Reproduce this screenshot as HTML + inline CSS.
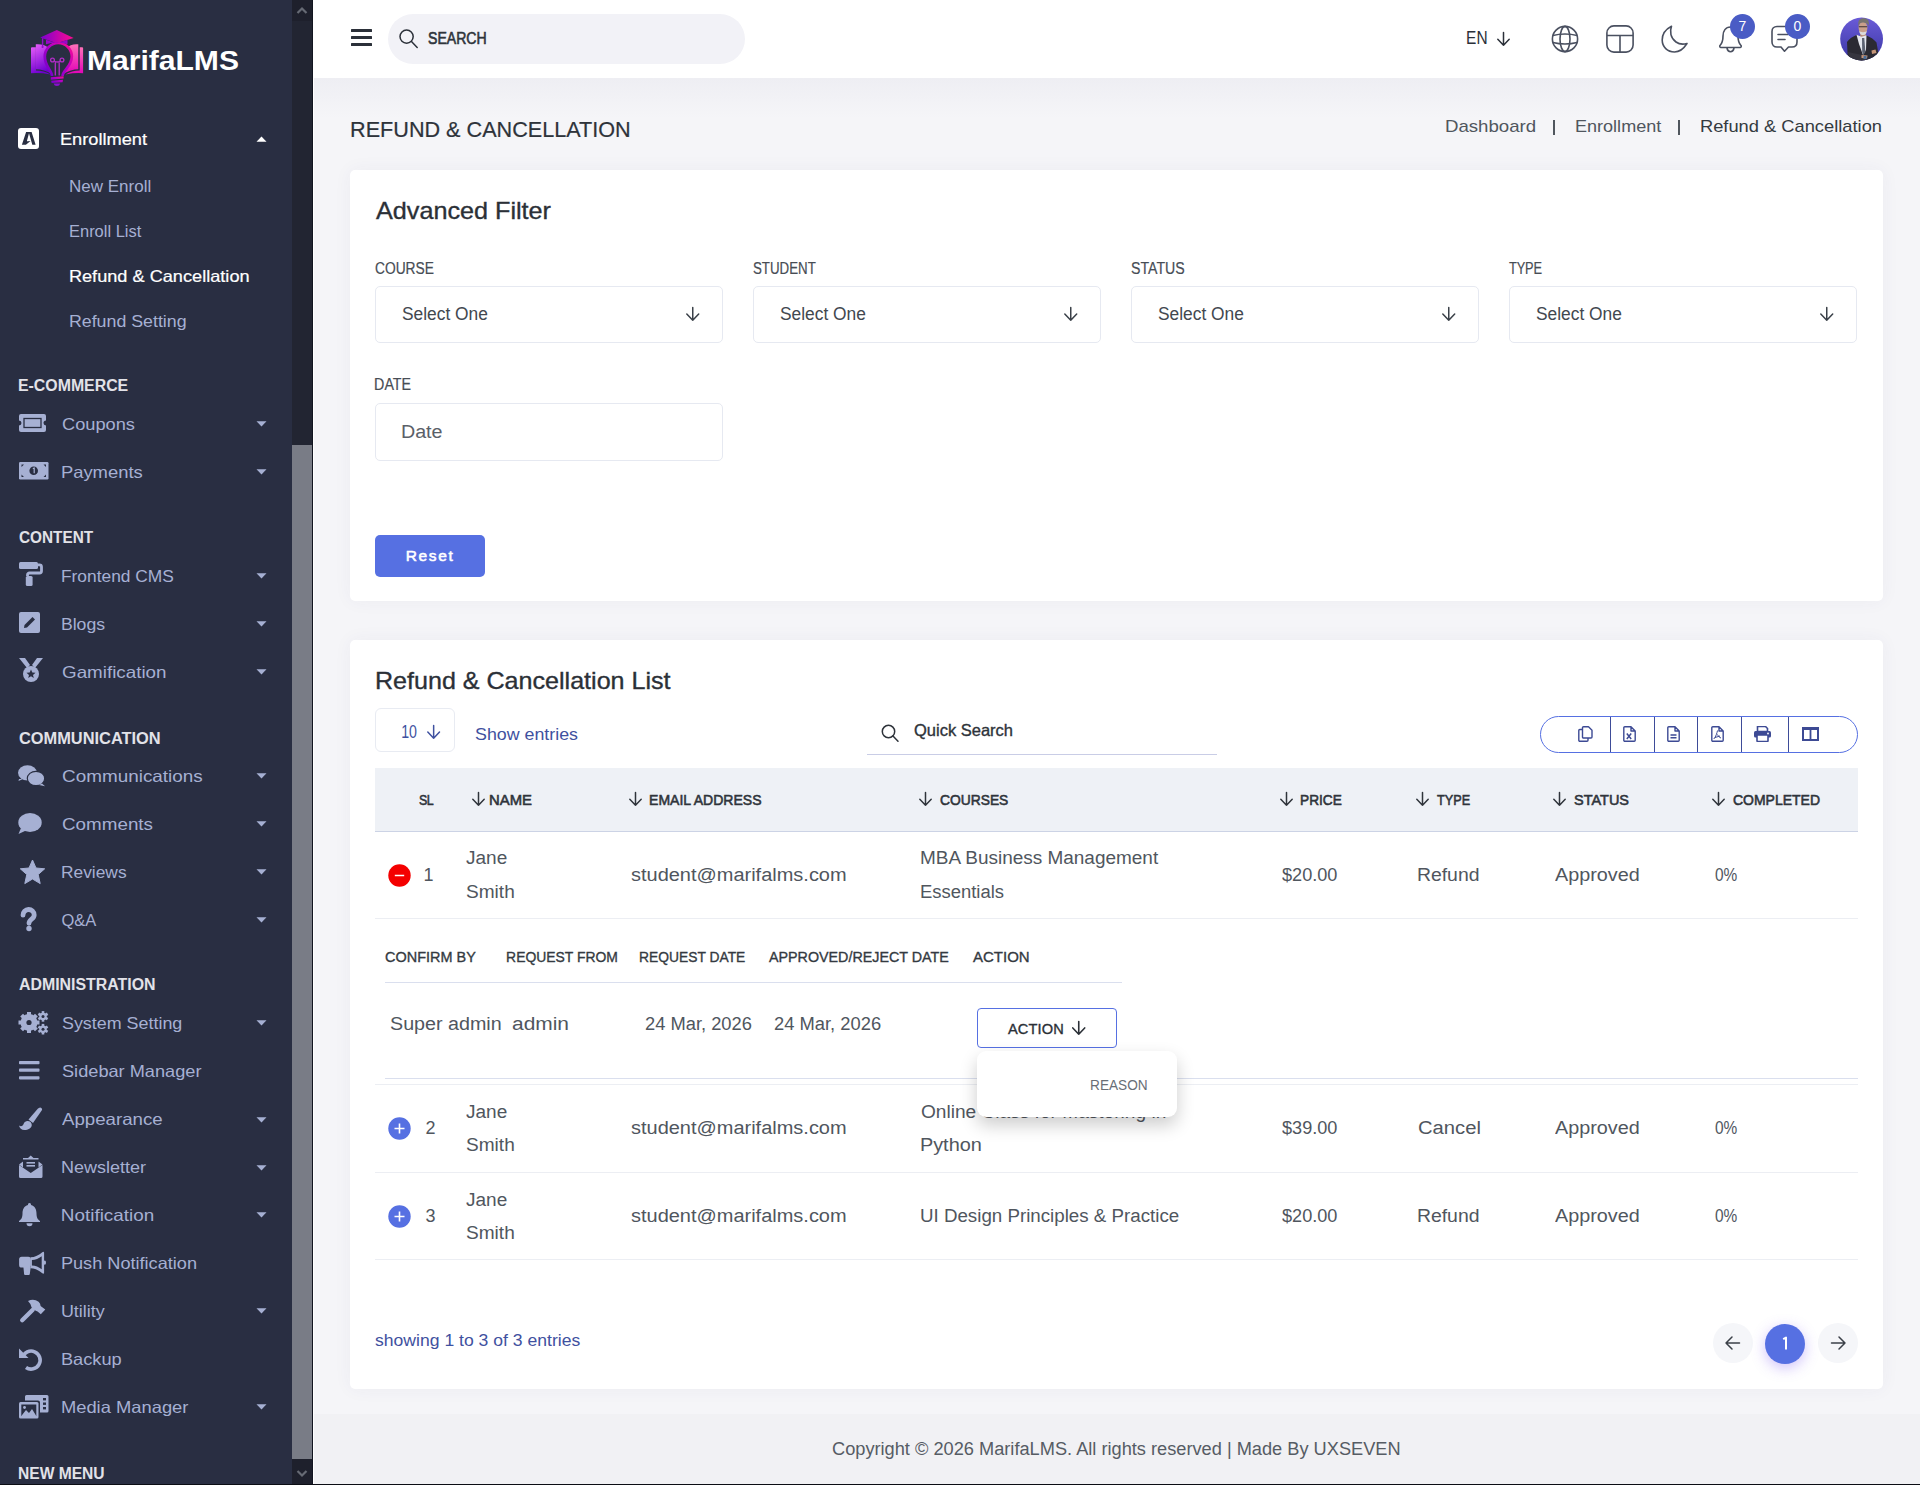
<!DOCTYPE html>
<html><head><meta charset="utf-8"><title>Refund &amp; Cancellation</title>
<style>
html,body{margin:0;padding:0;width:1920px;height:1485px;overflow:hidden;background:#F4F4F8}
body{position:relative;font-family:"Liberation Sans",sans-serif}
.t{position:absolute;white-space:nowrap;line-height:1}
svg{display:block}
</style></head><body>
<div style="position:absolute;left:0;top:0;width:292px;height:1485px;background:#292E42"></div><div style="position:absolute;left:292px;top:0;width:20px;height:1485px;background:#222532"></div><div style="position:absolute;left:292px;top:0;width:20px;height:21px;background:#1E202C"></div><div style="position:absolute;left:292px;top:1459px;width:20px;height:25px;background:#1E202C"></div><div style="position:absolute;left:292px;top:445px;width:20px;height:1014px;background:#797C86"></div><div style="position:absolute;left:312px;top:0;width:1px;height:1485px;background:#121520"></div><svg style="position:absolute;left:292px;top:0" width="20" height="21"><path d="M5.5 13 L10 8.5 L14.5 13" stroke="#666A74" stroke-width="2.2" fill="none"/></svg><svg style="position:absolute;left:292px;top:1459px" width="20" height="25"><path d="M5.5 12 L10 16.5 L14.5 12" stroke="#666A74" stroke-width="2.2" fill="none"/></svg><svg style="position:absolute;left:26px;top:26px" width="64" height="64" viewBox="0 0 64 64">
<defs>
<linearGradient id="lgA" x1="0" y1="1" x2="1" y2="0"><stop offset="0" stop-color="#6A00CC"/><stop offset="0.55" stop-color="#B400C8"/><stop offset="1" stop-color="#FF0A90"/></linearGradient>
<linearGradient id="lgL" x1="0" y1="0" x2="0.3" y2="1"><stop offset="0" stop-color="#E25AF8"/><stop offset="1" stop-color="#6E00D0"/></linearGradient>
<linearGradient id="lgR" x1="0" y1="0" x2="0" y2="1"><stop offset="0" stop-color="#FF70B8"/><stop offset="1" stop-color="#E000B8"/></linearGradient>
<linearGradient id="lgC" x1="0" y1="0" x2="1" y2="0"><stop offset="0" stop-color="#7A00D0"/><stop offset="1" stop-color="#FF0A90"/></linearGradient>
</defs>
<path d="M5 22 Q5 21.3 6 21.3 H9.9 V44.5 Q18 44.5 24.5 48.5 Q15 46.5 5 47.2 Z" fill="url(#lgL)"/>
<path d="M9.8 18.3 Q17.5 17.5 24 22.5 L26 48 Q18 43.2 9.8 43.2 Z" fill="url(#lgL)"/>
<path d="M57.1 22 Q57.1 21.3 56.1 21.3 H53.7 V44.5 Q46 44.5 39.5 48.5 Q49 46.5 57.1 47.2 Z" fill="url(#lgR)"/>
<path d="M52.3 18.3 Q45 17.5 40 22.5 L37 48 Q45 43.2 52.3 43.2 Z" fill="url(#lgR)"/>
<path d="M26 50 C26 44.5 18.8 40.5 18.8 30.5 A13.5 13.5 0 0 1 45.8 30.5 C45.8 40.5 36.6 44.5 36.6 50 Z" fill="#292E42"/>
<path d="M26 50 C26 44.5 18.8 40.5 18.8 30.5 A13.5 13.5 0 0 1 45.8 30.5 C45.8 40.5 36.6 44.5 36.6 50" fill="none" stroke="url(#lgA)" stroke-width="2.7"/>
<g fill="none" stroke="#B22CC8" stroke-width="1.3"><circle cx="26.5" cy="34" r="1.9"/><circle cx="36" cy="34" r="1.9"/><path d="M28.2 35 Q31.2 37 34.3 35 M29.3 36.2 V49.5 M33.2 36.2 V49.5"/></g>
<path d="M24.8 51.2 L37.6 50.2 L37.6 52.6 L24.8 53.8 Z M25.2 54.8 L37 53.8 L36.6 56.2 L25.6 57 Z" fill="url(#lgA)"/>
<path d="M27.6 57.4 H34.2 Q33.6 60 30.9 60 Q28.2 60 27.6 57.4 Z" fill="#8A10D0"/>
<path d="M14.2 11.6 L30.8 4.1 L47.6 12 L30.8 17.2 Z" fill="url(#lgC)"/>
<path d="M20 13.8 V18.2 Q31 14.6 41.5 18.2 V13.8 L30.8 17.2 Z" fill="#9A08C8"/>
<path d="M16.6 12.2 V20.5" stroke="#9010C8" stroke-width="1.4"/><circle cx="16.6" cy="21" r="1.1" fill="#9010C8"/>
</svg><div class="t" style="left:87.00px;top:47.33px;font-size:27.5px;font-weight:700;letter-spacing:0.000px;color:#FFFFFF;transform:scaleX(1.0937);transform-origin:1.00px 0;">MarifaLMS</div><div style="position:absolute;left:18px;top:128px;width:21px;height:21px;background:#fff;border-radius:3px"></div><svg style="position:absolute;left:18px;top:128px" width="21" height="21"><path d="M8.1 4.1 L13.6 4.1 L17.6 16.7 L14.3 16.7 L11 5.2 L7.9 16.7 L3.9 16.7 Z M6.6 13.4 L12.5 13.1 L7.9 16.7 L5.8 16.7 Z" fill="#292E42"/></svg><div class="t" style="left:60.30px;top:130.78px;font-size:16.5px;font-weight:400;letter-spacing:0.000px;color:#FFFFFF;transform:scaleX(1.1050);transform-origin:1.00px 0;-webkit-text-stroke:0.2px currentColor;">Enrollment</div><svg style="position:absolute;left:256px;top:136px" width="11" height="6"><path d="M0.5 5.8 L5.5 0.5 L10.5 5.8 Z" fill="#fff"/></svg><div class="t" style="left:68.60px;top:178.07px;font-size:16.5px;font-weight:400;letter-spacing:0.000px;color:#A6B0D3;transform:scaleX(1.0306);transform-origin:1.00px 0;">New Enroll</div><div class="t" style="left:68.60px;top:223.17px;font-size:16.5px;font-weight:400;letter-spacing:0.000px;color:#A6B0D3;transform:scaleX(0.9971);transform-origin:1.00px 0;">Enroll List</div><div class="t" style="left:68.60px;top:267.98px;font-size:16.5px;font-weight:400;letter-spacing:0.000px;color:#FFFFFF;transform:scaleX(1.1005);transform-origin:1.00px 0;-webkit-text-stroke:0.2px currentColor;">Refund &amp; Cancellation</div><div class="t" style="left:68.60px;top:313.18px;font-size:16.5px;font-weight:400;letter-spacing:0.000px;color:#A6B0D3;transform:scaleX(1.0779);transform-origin:1.00px 0;">Refund Setting</div><div class="t" style="left:17.70px;top:377.80px;font-size:16px;font-weight:700;letter-spacing:0.000px;color:#E2E2E8;transform:scaleX(0.9915);transform-origin:1.00px 0;">E-COMMERCE</div><div class="t" style="left:61.50px;top:416.18px;font-size:16.5px;font-weight:400;letter-spacing:0.000px;color:#A6B0D3;transform:scaleX(1.1049);transform-origin:-0.00px 0;">Coupons</div><svg style="position:absolute;left:18.5px;top:413.5px;overflow:visible" width="27" height="18" viewBox="0 0 27 18"><path d="M2 0 H25 A2 2 0 0 1 27 2 V6.5 A2.5 2.5 0 0 0 27 11.5 V16 A2 2 0 0 1 25 18 H2 A2 2 0 0 1 0 16 V11.5 A2.5 2.5 0 0 0 0 6.5 V2 A2 2 0 0 1 2 0 Z" fill="#A6B0D3"/><rect x="5" y="4.5" width="17" height="9" fill="none" stroke="#292E42" stroke-width="1.3"/></svg><svg style="position:absolute;left:256px;top:421.3px" width="11" height="6"><path d="M0.5 0.2 L5.5 5.5 L10.5 0.2 Z" fill="#A6B0D3"/></svg><div class="t" style="left:60.50px;top:463.98px;font-size:16.5px;font-weight:400;letter-spacing:0.000px;color:#A6B0D3;transform:scaleX(1.1163);transform-origin:1.00px 0;">Payments</div><svg style="position:absolute;left:18.5px;top:461.7px;overflow:visible" width="29.5" height="17.5" viewBox="0 0 29.5 17.5"><rect x="0" y="0" width="29.5" height="17.5" rx="1.2" fill="#A6B0D3"/><circle cx="14.7" cy="8.8" r="4.3" fill="#292E42"/><path d="M13.8 6.5 L15.2 6 L15.2 11.3" stroke="#A6B0D3" stroke-width="1.2" fill="none"/><path d="M2.5 2.5 L5 2.5 L2.5 5 Z M27 2.5 L24.5 2.5 L27 5 Z M2.5 15 L5 15 L2.5 12.5 Z M27 15 L24.5 15 L27 12.5 Z" fill="#292E42"/></svg><svg style="position:absolute;left:256px;top:469.1px" width="11" height="6"><path d="M0.5 0.2 L5.5 5.5 L10.5 0.2 Z" fill="#A6B0D3"/></svg><div class="t" style="left:18.70px;top:529.80px;font-size:16px;font-weight:700;letter-spacing:0.000px;color:#E2E2E8;transform:scaleX(0.9580);transform-origin:-0.00px 0;">CONTENT</div><div class="t" style="left:60.50px;top:567.88px;font-size:16.5px;font-weight:400;letter-spacing:0.000px;color:#A6B0D3;transform:scaleX(1.0528);transform-origin:1.00px 0;">Frontend CMS</div><svg style="position:absolute;left:18.5px;top:562.4px;overflow:visible" width="24" height="24" viewBox="0 0 24 24"><rect x="0" y="0" width="19" height="7" rx="1.5" fill="#A6B0D3"/><path d="M18.5 2.8 H20.5 A2 2 0 0 1 22.5 4.8 V9 A2 2 0 0 1 20.5 11 H10.5 A2 2 0 0 0 8.5 13 V14" stroke="#A6B0D3" stroke-width="2.8" fill="none"/><rect x="6.8" y="14" width="6.8" height="10" rx="1.5" fill="#A6B0D3"/></svg><svg style="position:absolute;left:256px;top:573px" width="11" height="6"><path d="M0.5 0.2 L5.5 5.5 L10.5 0.2 Z" fill="#A6B0D3"/></svg><div class="t" style="left:60.50px;top:615.88px;font-size:16.5px;font-weight:400;letter-spacing:0.000px;color:#A6B0D3;transform:scaleX(1.0694);transform-origin:1.00px 0;">Blogs</div><svg style="position:absolute;left:18.5px;top:612px;overflow:visible" width="21" height="21" viewBox="0 0 21 21"><rect x="0" y="0" width="21" height="21" rx="2" fill="#A6B0D3"/><path d="M5 16 L5.5 13 L13.5 5 L16 7.5 L8 15.5 Z" fill="#292E42"/></svg><svg style="position:absolute;left:256px;top:621px" width="11" height="6"><path d="M0.5 0.2 L5.5 5.5 L10.5 0.2 Z" fill="#A6B0D3"/></svg><div class="t" style="left:61.50px;top:663.88px;font-size:16.5px;font-weight:400;letter-spacing:0.000px;color:#A6B0D3;transform:scaleX(1.1396);transform-origin:-0.00px 0;">Gamification</div><svg style="position:absolute;left:18.5px;top:658px;overflow:visible" width="24" height="24" viewBox="0 0 24 24"><path d="M0 0 H6 L11 7 L8 10 Z M24 0 H18 L13 7 L16 10 Z" fill="#A6B0D3"/><circle cx="12" cy="16" r="8" fill="#A6B0D3"/><path d="M12 11.5 L13.3 14.6 L16.5 14.8 L14 16.9 L14.8 20 L12 18.3 L9.2 20 L10 16.9 L7.5 14.8 L10.7 14.6 Z" fill="#292E42"/></svg><svg style="position:absolute;left:256px;top:669px" width="11" height="6"><path d="M0.5 0.2 L5.5 5.5 L10.5 0.2 Z" fill="#A6B0D3"/></svg><div class="t" style="left:18.70px;top:730.90px;font-size:16px;font-weight:700;letter-spacing:0.000px;color:#E2E2E8;transform:scaleX(1.0240);transform-origin:-0.00px 0;">COMMUNICATION</div><div class="t" style="left:61.50px;top:768.17px;font-size:16.5px;font-weight:400;letter-spacing:0.000px;color:#A6B0D3;transform:scaleX(1.1457);transform-origin:-0.00px 0;">Communications</div><svg style="position:absolute;left:18.2px;top:764.7px;overflow:visible" width="27" height="21.5" viewBox="0 0 27 21.5"><ellipse cx="9.5" cy="7.8" rx="9.5" ry="7.6" fill="#A6B0D3"/><path d="M1 14 L0.5 16 L5 14 Z" fill="#A6B0D3"/><ellipse cx="18" cy="13.5" rx="8.7" ry="7.2" fill="#A6B0D3" stroke="#292E42" stroke-width="1.2"/><path d="M24 18.5 L27 21.3 L21 20 Z" fill="#A6B0D3"/></svg><svg style="position:absolute;left:256px;top:773.3px" width="11" height="6"><path d="M0.5 0.2 L5.5 5.5 L10.5 0.2 Z" fill="#A6B0D3"/></svg><div class="t" style="left:61.50px;top:816.27px;font-size:16.5px;font-weight:400;letter-spacing:-0.000px;color:#A6B0D3;transform:scaleX(1.1406);transform-origin:-0.00px 0;">Comments</div><svg style="position:absolute;left:18.2px;top:812.9px;overflow:visible" width="24" height="21" viewBox="0 0 24 21"><ellipse cx="12" cy="9.5" rx="11.7" ry="9.5" fill="#A6B0D3"/><path d="M3 15 L0.5 21 L8 17.5 Z" fill="#A6B0D3"/></svg><svg style="position:absolute;left:256px;top:821.4px" width="11" height="6"><path d="M0.5 0.2 L5.5 5.5 L10.5 0.2 Z" fill="#A6B0D3"/></svg><div class="t" style="left:60.50px;top:864.08px;font-size:16.5px;font-weight:400;letter-spacing:0.000px;color:#A6B0D3;transform:scaleX(1.0524);transform-origin:1.00px 0;">Reviews</div><svg style="position:absolute;left:19.5px;top:859.6px;overflow:visible" width="25" height="24" viewBox="0 0 25 24"><path d="M12.5 0 L16 8 L24.7 8.8 L18.2 14.5 L20.2 23.6 L12.5 19 L4.8 23.6 L6.8 14.5 L0.3 8.8 L9 8 Z" fill="#A6B0D3" stroke="#A6B0D3" stroke-width="1" stroke-linejoin="round"/></svg><svg style="position:absolute;left:256px;top:869.2px" width="11" height="6"><path d="M0.5 0.2 L5.5 5.5 L10.5 0.2 Z" fill="#A6B0D3"/></svg><div class="t" style="left:61.50px;top:911.67px;font-size:16.5px;font-weight:400;letter-spacing:0.000px;color:#A6B0D3;">Q&amp;A</div><svg style="position:absolute;left:19.7px;top:907.5px;overflow:visible" width="17" height="23" viewBox="0 0 17 23"><path d="M3 7.2 A5.6 5.6 0 0 1 14.2 7 C14.2 11.2 9 11 9 15.3" stroke="#A6B0D3" stroke-width="4.8" fill="none" stroke-linecap="round"/><circle cx="9" cy="20.5" r="2.7" fill="#A6B0D3"/></svg><svg style="position:absolute;left:256px;top:916.8px" width="11" height="6"><path d="M0.5 0.2 L5.5 5.5 L10.5 0.2 Z" fill="#A6B0D3"/></svg><div class="t" style="left:18.70px;top:976.90px;font-size:16px;font-weight:700;letter-spacing:0.000px;color:#E2E2E8;transform:scaleX(0.9933);transform-origin:-0.00px 0;">ADMINISTRATION</div><div class="t" style="left:61.50px;top:1014.88px;font-size:16.5px;font-weight:400;letter-spacing:0.000px;color:#A6B0D3;transform:scaleX(1.0841);transform-origin:-0.00px 0;">System Setting</div><svg style="position:absolute;left:18.7px;top:1011px;overflow:visible" width="29.5" height="23.5" viewBox="0 0 29.5 23.5"><circle cx="10" cy="11.5" r="8.5" fill="#A6B0D3"/><circle cx="10" cy="11.5" r="2.6" fill="#292E42"/><rect x="8" y="1" width="4" height="21" fill="#A6B0D3" transform="rotate(0 10 11.5)"/><rect x="8" y="1" width="4" height="21" fill="#A6B0D3" transform="rotate(45 10 11.5)"/><rect x="8" y="1" width="4" height="21" fill="#A6B0D3" transform="rotate(90 10 11.5)"/><rect x="8" y="1" width="4" height="21" fill="#A6B0D3" transform="rotate(135 10 11.5)"/><circle cx="10" cy="11.5" r="2.6" fill="#292E42"/><rect x="22.7" y="0.10000000000000053" width="2.6" height="10.6" fill="#A6B0D3" transform="rotate(0 24 5.4)"/><rect x="22.7" y="0.10000000000000053" width="2.6" height="10.6" fill="#A6B0D3" transform="rotate(60 24 5.4)"/><rect x="22.7" y="0.10000000000000053" width="2.6" height="10.6" fill="#A6B0D3" transform="rotate(120 24 5.4)"/><circle cx="24" cy="5.4" r="3.7" fill="#A6B0D3"/><circle cx="24" cy="5.4" r="1.5" fill="#292E42"/><rect x="22.7" y="12.899999999999999" width="2.6" height="10.6" fill="#A6B0D3" transform="rotate(0 24 18.2)"/><rect x="22.7" y="12.899999999999999" width="2.6" height="10.6" fill="#A6B0D3" transform="rotate(60 24 18.2)"/><rect x="22.7" y="12.899999999999999" width="2.6" height="10.6" fill="#A6B0D3" transform="rotate(120 24 18.2)"/><circle cx="24" cy="18.2" r="3.7" fill="#A6B0D3"/><circle cx="24" cy="18.2" r="1.5" fill="#292E42"/></svg><svg style="position:absolute;left:256px;top:1020px" width="11" height="6"><path d="M0.5 0.2 L5.5 5.5 L10.5 0.2 Z" fill="#A6B0D3"/></svg><div class="t" style="left:61.50px;top:1062.88px;font-size:16.5px;font-weight:400;letter-spacing:0.000px;color:#A6B0D3;transform:scaleX(1.1016);transform-origin:-0.00px 0;">Sidebar Manager</div><svg style="position:absolute;left:18.7px;top:1061.4px;overflow:visible" width="20.5" height="18.5" viewBox="0 0 20.5 18.5"><rect x="0" y="0" width="20.5" height="3.2" rx="0.8" fill="#A6B0D3"/><rect x="0" y="7.6" width="20.5" height="3.2" rx="0.8" fill="#A6B0D3"/><rect x="0" y="15.2" width="20.5" height="3.2" rx="0.8" fill="#A6B0D3"/></svg><div class="t" style="left:61.50px;top:1111.38px;font-size:16.5px;font-weight:400;letter-spacing:0.000px;color:#A6B0D3;transform:scaleX(1.1316);transform-origin:-0.00px 0;">Appearance</div><svg style="position:absolute;left:18.7px;top:1106.8px;overflow:visible" width="23.5" height="23" viewBox="0 0 23.5 23"><path d="M21 0.5 A2 2 0 0 1 23 3 L14 16 L9.5 12.5 L19 1.5 Z" fill="#A6B0D3"/><path d="M8 14 A4.5 4.5 0 0 1 12.8 18 C12.5 21.5 9 23 5.5 23 C2.5 23 0.5 21 0 18.5 C2 20 4 19 4.5 17 A4 4 0 0 1 8 14 Z" fill="#A6B0D3"/></svg><svg style="position:absolute;left:256px;top:1116.5px" width="11" height="6"><path d="M0.5 0.2 L5.5 5.5 L10.5 0.2 Z" fill="#A6B0D3"/></svg><div class="t" style="left:60.50px;top:1159.38px;font-size:16.5px;font-weight:400;letter-spacing:0.000px;color:#A6B0D3;transform:scaleX(1.0911);transform-origin:1.00px 0;">Newsletter</div><svg style="position:absolute;left:18.7px;top:1155px;overflow:visible" width="23.5" height="23" viewBox="0 0 23.5 23"><path d="M0 10 L11.75 18 L23.5 10 V21.5 A1.5 1.5 0 0 1 22 23 H1.5 A1.5 1.5 0 0 1 0 21.5 Z" fill="#A6B0D3"/><path d="M0 9.5 L4 6.5 V3 H9 L11.75 0.5 L14.5 3 H19.5 V6.5 L23.5 9.5 L19.5 12.5 V4.5 H4 V12.5 Z" fill="#A6B0D3"/><rect x="7.5" y="7" width="8.5" height="1.6" fill="#A6B0D3"/><rect x="7.5" y="10" width="8.5" height="1.6" fill="#A6B0D3"/></svg><svg style="position:absolute;left:256px;top:1164.5px" width="11" height="6"><path d="M0.5 0.2 L5.5 5.5 L10.5 0.2 Z" fill="#A6B0D3"/></svg><div class="t" style="left:60.50px;top:1207.28px;font-size:16.5px;font-weight:400;letter-spacing:0.000px;color:#A6B0D3;transform:scaleX(1.1436);transform-origin:1.00px 0;">Notification</div><svg style="position:absolute;left:18.5px;top:1202.8px;overflow:visible" width="21" height="23.5" viewBox="0 0 21 23.5"><path d="M10.5 0 C12 0 12 1.5 12 2 C16 3 17.5 6.5 17.5 10.5 C17.5 15 19 16.5 21 18 V19 H0 V18 C2 16.5 3.5 15 3.5 10.5 C3.5 6.5 5 3 9 2 C9 1.5 9 0 10.5 0 Z" fill="#A6B0D3"/><path d="M7.5 20.2 H13.5 A3 3 0 0 1 7.5 20.2 Z" fill="#A6B0D3"/></svg><svg style="position:absolute;left:256px;top:1212.4px" width="11" height="6"><path d="M0.5 0.2 L5.5 5.5 L10.5 0.2 Z" fill="#A6B0D3"/></svg><div class="t" style="left:60.50px;top:1255.28px;font-size:16.5px;font-weight:400;letter-spacing:0.000px;color:#A6B0D3;transform:scaleX(1.0992);transform-origin:1.00px 0;">Push Notification</div><svg style="position:absolute;left:18.5px;top:1250.5px;overflow:visible" width="27" height="24" viewBox="0 0 27 24"><rect x="0.1" y="5.8" width="11.8" height="10.8" rx="2.6" fill="#A6B0D3"/><path d="M4.4 16 H11.7 L10.8 23 Q10.7 23.9 9.8 23.9 H6 Q5.2 23.9 5.1 23 Z" fill="#A6B0D3"/><path fill-rule="evenodd" d="M11.5 6.3 C16 6.3 20 4 23.3 1.2 Q25 0 25.1 2 V21.5 Q25 23.4 23.3 22.3 C20 19.5 16 17.2 11.5 17.2 Z M12.9 8.9 C16.5 8.9 19.7 7.4 22.7 5.2 V18.3 C19.7 16.1 16.5 14.6 12.9 14.6 Z" fill="#A6B0D3"/><ellipse cx="25.7" cy="11.7" rx="1.3" ry="2.1" fill="#A6B0D3"/></svg><div class="t" style="left:60.50px;top:1303.17px;font-size:16.5px;font-weight:400;letter-spacing:0.000px;color:#A6B0D3;transform:scaleX(1.0853);transform-origin:1.00px 0;">Utility</div><svg style="position:absolute;left:18.5px;top:1298.5px;overflow:visible" width="27" height="24" viewBox="0 0 27 24"><path d="M3.2 21.3 L13.8 10.7" stroke="#A6B0D3" stroke-width="4.3" stroke-linecap="round"/><path d="M9 2.1 Q14.5 -0.9 19.6 2.8 Q21.6 4.6 21.6 7.1 L26.3 10.4 L21.8 15.2 L18.6 12.4 Q16.6 12.1 15.1 10.6 L12.6 8.4 Q11.7 4.6 9 2.1 Z" fill="#A6B0D3"/></svg><svg style="position:absolute;left:256px;top:1308.3px" width="11" height="6"><path d="M0.5 0.2 L5.5 5.5 L10.5 0.2 Z" fill="#A6B0D3"/></svg><div class="t" style="left:60.50px;top:1351.17px;font-size:16.5px;font-weight:400;letter-spacing:0.000px;color:#A6B0D3;transform:scaleX(1.1047);transform-origin:1.00px 0;">Backup</div><svg style="position:absolute;left:19px;top:1347.7px;overflow:visible" width="23" height="23" viewBox="0 0 23 23"><path d="M3.5 9.5 A9 9 0 1 1 7 19.5" stroke="#A6B0D3" stroke-width="3.6" fill="none"/><path d="M0 0.5 V10 H9.5 Z" fill="#A6B0D3"/></svg><div class="t" style="left:60.50px;top:1399.08px;font-size:16.5px;font-weight:400;letter-spacing:0.000px;color:#A6B0D3;transform:scaleX(1.1126);transform-origin:1.00px 0;">Media Manager</div><svg style="position:absolute;left:18.5px;top:1395px;overflow:visible" width="29.5" height="23.5" viewBox="0 0 29.5 23.5"><path d="M7.5 0 H28 A1.5 1.5 0 0 1 29.5 1.5 V16 A1.5 1.5 0 0 1 28 17.5 H21 V7.5 A2 2 0 0 0 19 5.5 H6 V1.5 A1.5 1.5 0 0 1 7.5 0 Z" fill="#A6B0D3"/><rect x="24" y="3" width="3" height="2.4" fill="#292E42"/><rect x="24" y="7.5" width="3" height="2.4" fill="#292E42"/><rect x="24" y="12" width="3" height="2.4" fill="#292E42"/><rect x="0" y="7" width="19.5" height="16.5" rx="1.5" fill="#A6B0D3"/><rect x="2.3" y="9.5" width="15" height="11.5" fill="#292E42"/><path d="M2.3 21 L7 15 L10 18 L13 14 L17.3 21 Z" fill="#A6B0D3"/><circle cx="5.5" cy="12.5" r="1.4" fill="#A6B0D3"/></svg><svg style="position:absolute;left:256px;top:1404.2px" width="11" height="6"><path d="M0.5 0.2 L5.5 5.5 L10.5 0.2 Z" fill="#A6B0D3"/></svg><div class="t" style="left:17.70px;top:1466.40px;font-size:16px;font-weight:700;letter-spacing:0.000px;color:#E2E2E8;transform:scaleX(0.9733);transform-origin:1.00px 0;">NEW MENU</div><div style="position:absolute;left:313px;top:0;width:1607px;height:1485px;background:#F5F5F8"></div><div style="position:absolute;left:313px;top:78px;width:1607px;height:40px;background:linear-gradient(#EEEEF3,rgba(244,244,248,0))"></div><div style="position:absolute;left:313px;top:1414px;width:1607px;height:71px;background:#F1F1F4"></div><div style="position:absolute;left:313px;top:0;width:1px;height:1484px;background:#FFFFFF"></div><div style="position:absolute;left:0;top:1484px;width:1920px;height:1px;background:#0B0D14"></div><div style="position:absolute;left:314px;top:0;width:1606px;height:78px;background:#FFFFFF"></div><div style="position:absolute;left:351px;top:29.3px;width:21px;height:2.6px;background:#2B3039;border-radius:0.5px"></div><div style="position:absolute;left:351px;top:36.3px;width:21px;height:2.6px;background:#2B3039;border-radius:0.5px"></div><div style="position:absolute;left:351px;top:43.3px;width:21px;height:2.6px;background:#2B3039;border-radius:0.5px"></div><div style="position:absolute;left:388px;top:14px;width:357px;height:50px;border-radius:25px;background:#F2F2F7"></div><svg style="position:absolute;left:399px;top:29px" width="20" height="20" viewBox="0 0 20 20"><circle cx="7.6" cy="7.6" r="6.6" stroke="#2B3039" stroke-width="1.5" fill="none"/><path d="M12.5 12.5 L18.2 18.4" stroke="#2B3039" stroke-width="1.5" stroke-linecap="round"/></svg><div class="t" style="left:427.90px;top:30.70px;font-size:16px;font-weight:400;letter-spacing:0.000px;color:#2F343B;transform:scaleX(0.8786);transform-origin:-0.00px 0;-webkit-text-stroke:0.6px currentColor;">SEARCH</div><div class="t" style="left:1466.00px;top:30.12px;font-size:17.5px;font-weight:400;letter-spacing:0.000px;color:#2B3039;transform:scaleX(0.8821);transform-origin:1.00px 0;">EN</div><svg style="position:absolute;left:1497px;top:32px;overflow:visible" width="13" height="14" viewBox="0 0 13 14"><path d="M6.5 0.5 V13.2 M0.8 7.2 L6.5 13.2 L12.2 7.2" stroke="#2B3039" stroke-width="1.5" fill="none" stroke-linecap="round" stroke-linejoin="round"/></svg><svg style="position:absolute;left:1551px;top:25px" width="28" height="28" viewBox="0 0 28 28" fill="none" stroke="#4A5060" stroke-width="1.6">
<circle cx="14" cy="14" r="12.6"/><ellipse cx="14" cy="14" rx="5" ry="12.6"/><path d="M1.8 10.5 Q14 7.5 26.2 10.5 M1.8 17.5 Q14 20.5 26.2 17.5"/></svg><svg style="position:absolute;left:1606px;top:25px" width="28" height="28" viewBox="0 0 28 28" fill="none" stroke="#4A5060" stroke-width="1.6">
<rect x="0.9" y="0.9" width="26.2" height="26.2" rx="7"/><path d="M1 10.5 H27 M14 10.5 V27"/></svg><svg style="position:absolute;left:1661px;top:25px" width="28" height="28" viewBox="0 0 28 28" fill="none" stroke="#4A5060" stroke-width="1.6" stroke-linejoin="round">
<path d="M10.5 1.2 C6 3.5 1.2 8 1.2 15 C1.2 22 6.5 27 13.5 27 C19 27 22.5 24 26 18.5 C22.5 19.5 18.5 19.5 15 17 C9.5 13 8.5 6.5 10.5 1.2 Z"/></svg><svg style="position:absolute;left:1719px;top:25px" width="23" height="28" viewBox="0 0 23 28" fill="none" stroke="#4A5060" stroke-width="1.6" stroke-linejoin="round">
<path d="M11.5 2 C6.5 2 4 6 4 11 C4 16 3.5 18 1 20.5 C0.5 21 0.8 22.5 2 22.5 H21 C22.2 22.5 22.5 21 22 20.5 C19.5 18 19 16 19 11 C19 6 16.5 2 11.5 2 Z M8 23 C8.5 25.5 10 26.7 11.5 26.7 C13 26.7 14.5 25.5 15 23"/></svg><svg style="position:absolute;left:1771px;top:25px" width="28" height="28" viewBox="0 0 28 28" fill="none" stroke="#4A5060" stroke-width="1.6" stroke-linejoin="round" stroke-linecap="round">
<path d="M6 1.5 H21 C24 1.5 26 3.5 26 6.5 V17 C26 20 24 22 21 22 H17.5 L13.5 26.2 L10 22 H6 C3 22 1 20 1 17 V6.5 C1 3.5 3 1.5 6 1.5 Z"/><path d="M7 9.5 H17 M7 14.5 H14"/></svg><div style="position:absolute;left:1730.0px;top:14px;width:25px;height:25px;border-radius:50%;background:#4A5CC5"></div><div style="position:absolute;left:1785.0px;top:14px;width:25px;height:25px;border-radius:50%;background:#4A5CC5"></div><div class="t" style="left:1738.50px;top:19.40px;font-size:14px;font-weight:400;letter-spacing:0.000px;color:#fff;">7</div><div class="t" style="left:1793.60px;top:19.40px;font-size:14px;font-weight:400;letter-spacing:0.000px;color:#fff;">0</div><svg style="position:absolute;left:1836px;top:14px" width="52" height="50" viewBox="0 0 52 50">
<defs><linearGradient id="av" x1="0" y1="0" x2="0" y2="1"><stop offset="0" stop-color="#6E5EDC"/><stop offset="1" stop-color="#3633A0"/></linearGradient>
<clipPath id="avc"><circle cx="25.6" cy="25" r="21.4"/></clipPath></defs>
<g clip-path="url(#avc)"><rect width="52" height="50" fill="url(#av)"/>
<path d="M11 28 Q14 23.5 20.5 21 L25.5 23 L30.5 21.5 Q37 24 40.5 28.5 L42.5 40 L41 50 L12 50 Z" fill="#2B2A33"/>
<rect x="24.2" y="18" width="5.6" height="5" fill="#B88C76"/>
<path d="M20.5 20.8 L25.5 22.8 L30.5 21.3 L30 36 L27 41 L23 30 Z" fill="#E4E6EE"/>
<path d="M26 24 L28.3 24 L29.4 38 L27.5 41 L26.2 38 Z" fill="#5C6272"/>
<path d="M12 38 Q21 40 31.5 42 L31 50 L13 50 Z" fill="#36353F"/>
<path d="M25.5 41 L31.5 41.5 L31 44.5 L25.5 44 Z" fill="#C49478"/><rect x="27.5" y="42" width="3" height="3" fill="#4A6E9A"/>
<path d="M35.5 36.5 L39.5 35.5 L40.5 39 L36 40 Z" fill="#C49478"/>
<ellipse cx="27" cy="14" rx="4.4" ry="6.2" fill="#C9A08A"/>
<path d="M22.5 12 C21.5 6 24 4.2 27.5 4.2 C31.5 4.2 34 6.5 32.5 12 C31.5 9 29.5 8.5 27 8.5 C24.5 8.5 23 9.5 22.5 12 Z" fill="#77746F"/>
<path d="M22.8 12.8 H31.2" stroke="#3A3030" stroke-width="1.1"/>
<path d="M23 17 C24 20.5 25.5 21.3 27 21.3 C28.5 21.3 30 20.5 31 17 C29.5 18.5 24.5 18.5 23 17 Z" fill="#DADADA"/>
</g></svg><div class="t" style="left:349.90px;top:118.78px;font-size:22.5px;font-weight:400;letter-spacing:0.000px;color:#2E333A;transform:scaleX(0.9608);transform-origin:1.00px 0;-webkit-text-stroke:0.2px currentColor;">REFUND &amp; CANCELLATION</div><div class="t" style="left:1444.90px;top:117.85px;font-size:17px;font-weight:400;letter-spacing:0.000px;color:#50565E;transform:scaleX(1.0978);transform-origin:1.00px 0;">Dashboard</div><div style="position:absolute;left:1553px;top:120px;width:2px;height:15px;background:#50565E"></div><div class="t" style="left:1574.90px;top:117.85px;font-size:17px;font-weight:400;letter-spacing:0.000px;color:#50565E;transform:scaleX(1.0629);transform-origin:1.00px 0;">Enrollment</div><div style="position:absolute;left:1678px;top:120px;width:2px;height:15px;background:#50565E"></div><div class="t" style="left:1700.30px;top:117.85px;font-size:17px;font-weight:400;letter-spacing:0.000px;color:#343A40;transform:scaleX(1.0763);transform-origin:1.00px 0;">Refund &amp; Cancellation</div><div style="position:absolute;left:350px;top:170px;width:1533px;height:431px;background:#fff;border-radius:5px;box-shadow:0 0 18px rgba(60,60,110,0.05)"></div><div class="t" style="left:375.80px;top:199.00px;font-size:24px;font-weight:400;letter-spacing:0.000px;color:#2B3037;transform:scaleX(1.0495);transform-origin:-0.00px 0;-webkit-text-stroke:0.35px currentColor;">Advanced Filter</div><div class="t" style="left:375.40px;top:260.90px;font-size:16px;font-weight:400;letter-spacing:0.000px;color:#474D55;transform:scaleX(0.8609);transform-origin:-0.00px 0;-webkit-text-stroke:0.2px currentColor;">COURSE</div><div style="position:absolute;left:375px;top:286px;width:348px;height:57px;box-sizing:border-box;border:1px solid #E6E9F1;border-radius:5px"></div><div class="t" style="left:401.50px;top:305.10px;font-size:18px;font-weight:400;letter-spacing:0.000px;color:#42484F;transform:scaleX(0.9636);transform-origin:-0.00px 0;">Select One</div><svg style="position:absolute;left:686px;top:306.5px;overflow:visible" width="13.5" height="14" viewBox="0 0 13.5 14"><path d="M6.75 0.5 V13.2 M0.8 6.95 L6.75 13.2 L12.7 6.95" stroke="#3A4048" stroke-width="1.5" fill="none" stroke-linecap="round" stroke-linejoin="round"/></svg><div class="t" style="left:753.40px;top:260.90px;font-size:16px;font-weight:400;letter-spacing:0.000px;color:#474D55;transform:scaleX(0.8313);transform-origin:-0.00px 0;-webkit-text-stroke:0.2px currentColor;">STUDENT</div><div style="position:absolute;left:753px;top:286px;width:348px;height:57px;box-sizing:border-box;border:1px solid #E6E9F1;border-radius:5px"></div><div class="t" style="left:779.50px;top:305.10px;font-size:18px;font-weight:400;letter-spacing:0.000px;color:#42484F;transform:scaleX(0.9636);transform-origin:-0.00px 0;">Select One</div><svg style="position:absolute;left:1064px;top:306.5px;overflow:visible" width="13.5" height="14" viewBox="0 0 13.5 14"><path d="M6.75 0.5 V13.2 M0.8 6.95 L6.75 13.2 L12.7 6.95" stroke="#3A4048" stroke-width="1.5" fill="none" stroke-linecap="round" stroke-linejoin="round"/></svg><div class="t" style="left:1131.40px;top:260.90px;font-size:16px;font-weight:400;letter-spacing:0.000px;color:#474D55;transform:scaleX(0.8840);transform-origin:-0.00px 0;-webkit-text-stroke:0.2px currentColor;">STATUS</div><div style="position:absolute;left:1131px;top:286px;width:348px;height:57px;box-sizing:border-box;border:1px solid #E6E9F1;border-radius:5px"></div><div class="t" style="left:1157.50px;top:305.10px;font-size:18px;font-weight:400;letter-spacing:0.000px;color:#42484F;transform:scaleX(0.9636);transform-origin:-0.00px 0;">Select One</div><svg style="position:absolute;left:1442px;top:306.5px;overflow:visible" width="13.5" height="14" viewBox="0 0 13.5 14"><path d="M6.75 0.5 V13.2 M0.8 6.95 L6.75 13.2 L12.7 6.95" stroke="#3A4048" stroke-width="1.5" fill="none" stroke-linecap="round" stroke-linejoin="round"/></svg><div class="t" style="left:1509.40px;top:260.90px;font-size:16px;font-weight:400;letter-spacing:-0.164px;color:#474D55;transform:scaleX(0.8000);transform-origin:-0.00px 0;-webkit-text-stroke:0.2px currentColor;">TYPE</div><div style="position:absolute;left:1509px;top:286px;width:348px;height:57px;box-sizing:border-box;border:1px solid #E6E9F1;border-radius:5px"></div><div class="t" style="left:1535.50px;top:305.10px;font-size:18px;font-weight:400;letter-spacing:0.000px;color:#42484F;transform:scaleX(0.9636);transform-origin:-0.00px 0;">Select One</div><svg style="position:absolute;left:1820px;top:306.5px;overflow:visible" width="13.5" height="14" viewBox="0 0 13.5 14"><path d="M6.75 0.5 V13.2 M0.8 6.95 L6.75 13.2 L12.7 6.95" stroke="#3A4048" stroke-width="1.5" fill="none" stroke-linecap="round" stroke-linejoin="round"/></svg><div class="t" style="left:374.40px;top:376.80px;font-size:16px;font-weight:400;letter-spacing:0.000px;color:#474D55;transform:scaleX(0.8892);transform-origin:1.00px 0;-webkit-text-stroke:0.2px currentColor;">DATE</div><div style="position:absolute;left:375px;top:403px;width:348px;height:58px;box-sizing:border-box;border:1px solid #E6E9F1;border-radius:5px"></div><div class="t" style="left:400.50px;top:423.00px;font-size:18px;font-weight:400;letter-spacing:-0.000px;color:#5A6068;transform:scaleX(1.0943);transform-origin:1.00px 0;">Date</div><div style="position:absolute;left:375px;top:535px;width:110px;height:42px;background:#5670E2;border-radius:5px"></div><div class="t" style="left:405.70px;top:548.12px;font-size:15.5px;font-weight:400;letter-spacing:1.629px;color:#fff;-webkit-text-stroke:0.55px #fff;">Reset</div><div style="position:absolute;left:350px;top:640px;width:1533px;height:749px;background:#fff;border-radius:5px;box-shadow:0 0 18px rgba(60,60,110,0.05)"></div><div class="t" style="left:374.60px;top:669.00px;font-size:24px;font-weight:400;letter-spacing:0.000px;color:#2B3037;transform:scaleX(1.0451);transform-origin:1.00px 0;-webkit-text-stroke:0.35px currentColor;">Refund &amp; Cancellation List</div><div style="position:absolute;left:375px;top:708px;width:80px;height:44px;box-sizing:border-box;border:1px solid #E8EBF2;border-radius:6px"></div><div class="t" style="left:400.70px;top:724.12px;font-size:17.5px;font-weight:400;letter-spacing:0.000px;color:#3F51A0;transform:scaleX(0.8114);transform-origin:1.00px 0;">10</div><svg style="position:absolute;left:427px;top:724.5px;overflow:visible" width="13.3" height="14" viewBox="0 0 13.3 14"><path d="M6.65 0.5 V13.2 M0.8 7.05 L6.65 13.2 L12.5 7.05" stroke="#3F51A0" stroke-width="1.5" fill="none" stroke-linecap="round" stroke-linejoin="round"/></svg><div class="t" style="left:475.00px;top:725.55px;font-size:17px;font-weight:400;letter-spacing:-0.000px;color:#3F51A0;transform:scaleX(1.0483);transform-origin:-0.00px 0;">Show entries</div><svg style="position:absolute;left:881px;top:724px" width="19" height="19" viewBox="0 0 19 19"><circle cx="7.5" cy="7.5" r="6.2" stroke="#2E333A" stroke-width="1.5" fill="none"/><path d="M12 12 L17 17.2" stroke="#2E333A" stroke-width="1.5" stroke-linecap="round"/></svg><div class="t" style="left:914.00px;top:721.58px;font-size:16.5px;font-weight:400;letter-spacing:0.000px;color:#2E333A;-webkit-text-stroke:0.35px currentColor;">Quick Search</div><div style="position:absolute;left:867px;top:754px;width:350px;height:1px;background:#C9CDE6"></div><div style="position:absolute;left:1540px;top:716px;width:318px;height:37px;box-sizing:border-box;border:1.2px solid #5670E2;border-radius:19px"></div><div style="position:absolute;left:1610.1px;top:717px;width:1.2px;height:35px;background:#3E4C98"></div><div style="position:absolute;left:1653.8px;top:717px;width:1.2px;height:35px;background:#3E4C98"></div><div style="position:absolute;left:1696.8px;top:717px;width:1.2px;height:35px;background:#3E4C98"></div><div style="position:absolute;left:1740.8px;top:717px;width:1.2px;height:35px;background:#3E4C98"></div><div style="position:absolute;left:1788.0px;top:717px;width:1.2px;height:35px;background:#3E4C98"></div><svg style="position:absolute;left:1577.5px;top:726px" width="15" height="16" viewBox="0 0 15 16" fill="none" stroke="#3D4A94" stroke-width="1.4" stroke-linejoin="round">
<path d="M4.5 3.5 H1.8 A1 1 0 0 0 0.8 4.5 V14.2 A1 1 0 0 0 1.8 15.2 H9 A1 1 0 0 0 10 14.2 V12"/><path d="M4.5 1.8 A1 1 0 0 1 5.5 0.8 H10.5 L14 4.3 V11 A1 1 0 0 1 13 12 H5.5 A1 1 0 0 1 4.5 11 Z"/></svg><svg style="position:absolute;left:1623px;top:726px" width="13" height="16" viewBox="0 0 13 16" fill="none" stroke="#3D4A94" stroke-width="1.4" stroke-linejoin="round">
<path d="M1.8 0.8 H8 L12.2 5 V14.2 A1 1 0 0 1 11.2 15.2 H1.8 A1 1 0 0 1 0.8 14.2 V1.8 A1 1 0 0 1 1.8 0.8 Z M8 0.8 V5 H12.2"/><path d="M3.8 7.5 L8.2 13 M8.2 7.5 L3.8 13" stroke-width="1.5"/></svg><svg style="position:absolute;left:1667px;top:726px" width="13" height="16" viewBox="0 0 13 16" fill="none" stroke="#3D4A94" stroke-width="1.4" stroke-linejoin="round">
<path d="M1.8 0.8 H8 L12.2 5 V14.2 A1 1 0 0 1 11.2 15.2 H1.8 A1 1 0 0 1 0.8 14.2 V1.8 A1 1 0 0 1 1.8 0.8 Z M8 0.8 V5 H12.2"/><path d="M3.5 9 H9.5 M3.5 11.8 H9.5"/></svg><svg style="position:absolute;left:1710.6px;top:726px" width="13" height="16" viewBox="0 0 13 16" fill="none" stroke="#3D4A94" stroke-width="1.4" stroke-linejoin="round">
<path d="M1.8 0.8 H8 L12.2 5 V14.2 A1 1 0 0 1 11.2 15.2 H1.8 A1 1 0 0 1 0.8 14.2 V1.8 A1 1 0 0 1 1.8 0.8 Z M8 0.8 V5 H12.2"/><path d="M6.5 4.5 C6 7 5 10.5 2.8 13 M6.5 8.5 C7.5 10.5 8.5 11.5 10 12 M4 11.5 L9 10" stroke-width="1"/></svg><svg style="position:absolute;left:1754px;top:726px" width="17" height="16" viewBox="0 0 17 16">
<path d="M3.5 0.5 H11.5 L13.5 2.5 V5.5 H3.5 Z" fill="none" stroke="#3D4A94" stroke-width="1.6"/><rect x="0" y="5" width="17" height="6.5" rx="1.5" fill="#3D4A94"/><rect x="3" y="9" width="11" height="6.5" rx="0.8" fill="#fff" stroke="#3D4A94" stroke-width="1.6"/><circle cx="14" cy="7.5" r="0.9" fill="#fff"/></svg><svg style="position:absolute;left:1801.5px;top:727px" width="17" height="14" viewBox="0 0 17 14">
<rect x="1" y="1" width="15" height="12" fill="none" stroke="#3D4A94" stroke-width="2"/><rect x="0" y="0" width="17" height="3" fill="#3D4A94"/><rect x="7.6" y="1" width="1.8" height="12" fill="#3D4A94"/></svg><div style="position:absolute;left:375px;top:768px;width:1483px;height:64px;background:#EEF1F6;border-bottom:1px solid #CCD3E5;box-sizing:border-box"></div><div class="t" style="left:419.00px;top:792.03px;font-size:15.5px;font-weight:400;letter-spacing:-0.588px;color:#2F343B;transform:scaleX(0.8000);transform-origin:-0.00px 0;-webkit-text-stroke:0.6px currentColor;">SL</div><svg style="position:absolute;left:471.5px;top:792px;overflow:visible" width="13" height="14" viewBox="0 0 13 14"><path d="M6.5 0.5 V13.2 M0.8 7.2 L6.5 13.2 L12.2 7.2" stroke="#2F343B" stroke-width="1.5" fill="none" stroke-linecap="round" stroke-linejoin="round"/></svg><div class="t" style="left:489.40px;top:792.03px;font-size:15.5px;font-weight:400;letter-spacing:0.000px;color:#2F343B;transform:scaleX(0.9576);transform-origin:1.00px 0;-webkit-text-stroke:0.6px currentColor;">NAME</div><svg style="position:absolute;left:629.4px;top:792px;overflow:visible" width="13" height="14" viewBox="0 0 13 14"><path d="M6.5 0.5 V13.2 M0.8 7.2 L6.5 13.2 L12.2 7.2" stroke="#2F343B" stroke-width="1.5" fill="none" stroke-linecap="round" stroke-linejoin="round"/></svg><div class="t" style="left:649.20px;top:792.03px;font-size:15.5px;font-weight:400;letter-spacing:0.000px;color:#2F343B;transform:scaleX(0.9042);transform-origin:1.00px 0;-webkit-text-stroke:0.6px currentColor;">EMAIL ADDRESS</div><svg style="position:absolute;left:919px;top:792px;overflow:visible" width="13" height="14" viewBox="0 0 13 14"><path d="M6.5 0.5 V13.2 M0.8 7.2 L6.5 13.2 L12.2 7.2" stroke="#2F343B" stroke-width="1.5" fill="none" stroke-linecap="round" stroke-linejoin="round"/></svg><div class="t" style="left:940.00px;top:792.03px;font-size:15.5px;font-weight:400;letter-spacing:0.000px;color:#2F343B;transform:scaleX(0.8911);transform-origin:-0.00px 0;-webkit-text-stroke:0.6px currentColor;">COURSES</div><svg style="position:absolute;left:1280.2px;top:792px;overflow:visible" width="13" height="14" viewBox="0 0 13 14"><path d="M6.5 0.5 V13.2 M0.8 7.2 L6.5 13.2 L12.2 7.2" stroke="#2F343B" stroke-width="1.5" fill="none" stroke-linecap="round" stroke-linejoin="round"/></svg><div class="t" style="left:1300.00px;top:792.03px;font-size:15.5px;font-weight:400;letter-spacing:0.000px;color:#2F343B;transform:scaleX(0.8798);transform-origin:1.00px 0;-webkit-text-stroke:0.6px currentColor;">PRICE</div><svg style="position:absolute;left:1415.8px;top:792px;overflow:visible" width="13" height="14" viewBox="0 0 13 14"><path d="M6.5 0.5 V13.2 M0.8 7.2 L6.5 13.2 L12.2 7.2" stroke="#2F343B" stroke-width="1.5" fill="none" stroke-linecap="round" stroke-linejoin="round"/></svg><div class="t" style="left:1437.00px;top:792.03px;font-size:15.5px;font-weight:400;letter-spacing:0.000px;color:#2F343B;transform:scaleX(0.8170);transform-origin:-0.00px 0;-webkit-text-stroke:0.6px currentColor;">TYPE</div><svg style="position:absolute;left:1552.9px;top:792px;overflow:visible" width="13" height="14" viewBox="0 0 13 14"><path d="M6.5 0.5 V13.2 M0.8 7.2 L6.5 13.2 L12.2 7.2" stroke="#2F343B" stroke-width="1.5" fill="none" stroke-linecap="round" stroke-linejoin="round"/></svg><div class="t" style="left:1573.70px;top:792.03px;font-size:15.5px;font-weight:400;letter-spacing:0.000px;color:#2F343B;transform:scaleX(0.9350);transform-origin:-0.00px 0;-webkit-text-stroke:0.6px currentColor;">STATUS</div><svg style="position:absolute;left:1712.2px;top:792px;overflow:visible" width="13" height="14" viewBox="0 0 13 14"><path d="M6.5 0.5 V13.2 M0.8 7.2 L6.5 13.2 L12.2 7.2" stroke="#2F343B" stroke-width="1.5" fill="none" stroke-linecap="round" stroke-linejoin="round"/></svg><div class="t" style="left:1733.00px;top:792.03px;font-size:15.5px;font-weight:400;letter-spacing:0.000px;color:#2F343B;transform:scaleX(0.9017);transform-origin:-0.00px 0;-webkit-text-stroke:0.6px currentColor;">COMPLETED</div><svg style="position:absolute;left:388px;top:863.5999999999999px" width="23" height="23" viewBox="0 0 23 23"><circle cx="11.5" cy="11.5" r="11.2" fill="#F40000"/><path d="M6.8 11.5 H16.2" stroke="#fff" stroke-width="1.5"/></svg><div class="t" style="left:423.60px;top:866.00px;font-size:18px;font-weight:400;letter-spacing:0.000px;color:#50565E;">1</div><div class="t" style="left:465.80px;top:849.20px;font-size:18px;font-weight:400;letter-spacing:0.000px;color:#50565E;transform:scaleX(1.0558);transform-origin:-0.00px 0;">Jane</div><div class="t" style="left:465.80px;top:882.50px;font-size:18px;font-weight:400;letter-spacing:-0.000px;color:#50565E;transform:scaleX(1.0600);transform-origin:-0.00px 0;">Smith</div><div class="t" style="left:631.00px;top:866.00px;font-size:18px;font-weight:400;letter-spacing:0.000px;color:#50565E;transform:scaleX(1.1095);transform-origin:-0.00px 0;">student@marifalms.com</div><div class="t" style="left:920.30px;top:849.20px;font-size:18px;font-weight:400;letter-spacing:0.000px;color:#50565E;transform:scaleX(1.0535);transform-origin:1.00px 0;">MBA Business Management</div><div class="t" style="left:920.30px;top:882.50px;font-size:18px;font-weight:400;letter-spacing:0.000px;color:#50565E;transform:scaleX(1.0242);transform-origin:1.00px 0;">Essentials</div><div class="t" style="left:1282.00px;top:866.00px;font-size:18px;font-weight:400;letter-spacing:0.000px;color:#50565E;transform:scaleX(1.0065);transform-origin:-0.00px 0;">$20.00</div><div class="t" style="left:1416.50px;top:866.00px;font-size:18px;font-weight:400;letter-spacing:-0.000px;color:#50565E;transform:scaleX(1.0780);transform-origin:1.00px 0;">Refund</div><div class="t" style="left:1555.00px;top:866.00px;font-size:18px;font-weight:400;letter-spacing:0.000px;color:#50565E;transform:scaleX(1.0994);transform-origin:-0.00px 0;">Approved</div><div class="t" style="left:1714.70px;top:866.00px;font-size:18px;font-weight:400;letter-spacing:0.000px;color:#50565E;transform:scaleX(0.8573);transform-origin:-0.00px 0;">0%</div><div style="position:absolute;left:375px;top:918px;width:1483px;height:1px;background:#ECEEF3"></div><div class="t" style="left:385.20px;top:948.70px;font-size:15.3px;font-weight:400;letter-spacing:0.000px;color:#343A41;transform:scaleX(0.9454);transform-origin:-0.00px 0;-webkit-text-stroke:0.35px currentColor;">CONFIRM BY</div><div class="t" style="left:505.50px;top:948.70px;font-size:15.3px;font-weight:400;letter-spacing:0.000px;color:#343A41;transform:scaleX(0.9088);transform-origin:1.00px 0;-webkit-text-stroke:0.35px currentColor;">REQUEST FROM</div><div class="t" style="left:639.20px;top:948.70px;font-size:15.3px;font-weight:400;letter-spacing:0.000px;color:#343A41;transform:scaleX(0.9035);transform-origin:1.00px 0;-webkit-text-stroke:0.35px currentColor;">REQUEST DATE</div><div class="t" style="left:769.20px;top:948.70px;font-size:15.3px;font-weight:400;letter-spacing:0.000px;color:#343A41;transform:scaleX(0.9342);transform-origin:-0.00px 0;-webkit-text-stroke:0.35px currentColor;">APPROVED/REJECT DATE</div><div class="t" style="left:973.00px;top:948.70px;font-size:15.3px;font-weight:400;letter-spacing:0.000px;color:#343A41;transform:scaleX(0.9799);transform-origin:-0.00px 0;-webkit-text-stroke:0.35px currentColor;">ACTION</div><div style="position:absolute;left:385px;top:982px;width:737px;height:1px;background:#DADFEE"></div><div class="t" style="left:390.20px;top:1015.10px;font-size:18px;font-weight:400;letter-spacing:0.000px;color:#50565E;transform:scaleX(1.0945);transform-origin:-0.00px 0;">Super admin</div><div class="t" style="left:511.70px;top:1015.10px;font-size:18px;font-weight:400;letter-spacing:0.000px;color:#50565E;transform:scaleX(1.1621);transform-origin:-0.00px 0;">admin</div><div class="t" style="left:645.40px;top:1015.10px;font-size:18px;font-weight:400;letter-spacing:0.000px;color:#50565E;transform:scaleX(1.0175);transform-origin:-0.00px 0;">24 Mar, 2026</div><div class="t" style="left:773.70px;top:1015.10px;font-size:18px;font-weight:400;letter-spacing:-0.000px;color:#50565E;transform:scaleX(1.0194);transform-origin:-0.00px 0;">24 Mar, 2026</div><div style="position:absolute;left:977px;top:1008px;width:140px;height:40px;box-sizing:border-box;border:1.5px solid #5670E2;border-radius:4px"></div><div class="t" style="left:1007.90px;top:1021.79px;font-size:14.6px;font-weight:400;letter-spacing:0.141px;color:#2B3037;-webkit-text-stroke:0.35px currentColor;">ACTION</div><svg style="position:absolute;left:1072px;top:1020.5px;overflow:visible" width="13.5" height="14" viewBox="0 0 13.5 14"><path d="M6.75 0.5 V13.2 M0.8 6.95 L6.75 13.2 L12.7 6.95" stroke="#2B3037" stroke-width="1.6" fill="none" stroke-linecap="round" stroke-linejoin="round"/></svg><div style="position:absolute;left:385px;top:1078px;width:1473px;height:1px;background:#DADFEE"></div><div style="position:absolute;left:375px;top:1084px;width:1483px;height:1px;background:#ECEEF3"></div><svg style="position:absolute;left:388px;top:1116.8px" width="23" height="23" viewBox="0 0 23 23"><circle cx="11.5" cy="11.5" r="11.2" fill="#5670E2"/><path d="M6.5 11.5 H16.5 M11.5 6.5 V16.5" stroke="#fff" stroke-width="1.6"/></svg><div class="t" style="left:425.60px;top:1119.20px;font-size:18px;font-weight:400;letter-spacing:0.000px;color:#50565E;">2</div><div class="t" style="left:465.80px;top:1103.40px;font-size:18px;font-weight:400;letter-spacing:0.000px;color:#50565E;transform:scaleX(1.0558);transform-origin:-0.00px 0;">Jane</div><div class="t" style="left:465.80px;top:1135.70px;font-size:18px;font-weight:400;letter-spacing:-0.000px;color:#50565E;transform:scaleX(1.0600);transform-origin:-0.00px 0;">Smith</div><div class="t" style="left:631.00px;top:1119.20px;font-size:18px;font-weight:400;letter-spacing:0.000px;color:#50565E;transform:scaleX(1.1095);transform-origin:-0.00px 0;">student@marifalms.com</div><div class="t" style="left:921.30px;top:1103.40px;font-size:18px;font-weight:400;letter-spacing:0.000px;color:#50565E;transform:scaleX(1.0614);transform-origin:-0.00px 0;">Online Class for Mastering in</div><div class="t" style="left:920.30px;top:1135.70px;font-size:18px;font-weight:400;letter-spacing:-0.000px;color:#50565E;transform:scaleX(1.1050);transform-origin:1.00px 0;">Python</div><div class="t" style="left:1282.00px;top:1119.20px;font-size:18px;font-weight:400;letter-spacing:0.000px;color:#50565E;transform:scaleX(1.0065);transform-origin:-0.00px 0;">$39.00</div><div class="t" style="left:1417.50px;top:1119.20px;font-size:18px;font-weight:400;letter-spacing:-0.000px;color:#50565E;transform:scaleX(1.1230);transform-origin:-0.00px 0;">Cancel</div><div class="t" style="left:1555.00px;top:1119.20px;font-size:18px;font-weight:400;letter-spacing:0.000px;color:#50565E;transform:scaleX(1.0994);transform-origin:-0.00px 0;">Approved</div><div class="t" style="left:1714.70px;top:1119.20px;font-size:18px;font-weight:400;letter-spacing:0.000px;color:#50565E;transform:scaleX(0.8573);transform-origin:-0.00px 0;">0%</div><div style="position:absolute;left:375px;top:1172px;width:1483px;height:1px;background:#ECEEF3"></div><svg style="position:absolute;left:388px;top:1204.8px" width="23" height="23" viewBox="0 0 23 23"><circle cx="11.5" cy="11.5" r="11.2" fill="#5670E2"/><path d="M6.5 11.5 H16.5 M11.5 6.5 V16.5" stroke="#fff" stroke-width="1.6"/></svg><div class="t" style="left:425.60px;top:1207.20px;font-size:18px;font-weight:400;letter-spacing:0.000px;color:#50565E;">3</div><div class="t" style="left:465.80px;top:1191.40px;font-size:18px;font-weight:400;letter-spacing:0.000px;color:#50565E;transform:scaleX(1.0558);transform-origin:-0.00px 0;">Jane</div><div class="t" style="left:465.80px;top:1223.70px;font-size:18px;font-weight:400;letter-spacing:-0.000px;color:#50565E;transform:scaleX(1.0600);transform-origin:-0.00px 0;">Smith</div><div class="t" style="left:631.00px;top:1207.20px;font-size:18px;font-weight:400;letter-spacing:0.000px;color:#50565E;transform:scaleX(1.1095);transform-origin:-0.00px 0;">student@marifalms.com</div><div class="t" style="left:920.30px;top:1207.20px;font-size:18px;font-weight:400;letter-spacing:0.000px;color:#50565E;transform:scaleX(1.0408);transform-origin:1.00px 0;">UI Design Principles &amp; Practice</div><div class="t" style="left:1282.00px;top:1207.20px;font-size:18px;font-weight:400;letter-spacing:0.000px;color:#50565E;transform:scaleX(1.0065);transform-origin:-0.00px 0;">$20.00</div><div class="t" style="left:1416.50px;top:1207.20px;font-size:18px;font-weight:400;letter-spacing:-0.000px;color:#50565E;transform:scaleX(1.0780);transform-origin:1.00px 0;">Refund</div><div class="t" style="left:1555.00px;top:1207.20px;font-size:18px;font-weight:400;letter-spacing:0.000px;color:#50565E;transform:scaleX(1.0994);transform-origin:-0.00px 0;">Approved</div><div class="t" style="left:1714.70px;top:1207.20px;font-size:18px;font-weight:400;letter-spacing:0.000px;color:#50565E;transform:scaleX(0.8573);transform-origin:-0.00px 0;">0%</div><div style="position:absolute;left:375px;top:1259px;width:1483px;height:1px;background:#ECEEF3"></div><div style="position:absolute;left:977px;top:1051px;width:200px;height:66px;background:#fff;border-radius:9px;box-shadow:0 8px 18px rgba(0,0,0,0.2)"></div><div class="t" style="left:1089.70px;top:1076.65px;font-size:15px;font-weight:400;letter-spacing:0.000px;color:#686E76;transform:scaleX(0.9087);transform-origin:1.00px 0;">REASON</div><div class="t" style="left:375.30px;top:1331.95px;font-size:17px;font-weight:400;letter-spacing:0.000px;color:#3F51A0;transform:scaleX(1.0341);transform-origin:-0.00px 0;">showing 1 to 3 of 3 entries</div><div style="position:absolute;left:1713px;top:1323px;width:40px;height:40px;border-radius:50%;background:#F5F6F9"></div><div style="position:absolute;left:1818px;top:1323px;width:40px;height:40px;border-radius:50%;background:#F5F6F9"></div><div style="position:absolute;left:1765px;top:1324px;width:40px;height:40px;border-radius:50%;background:#5670E2;box-shadow:0 4px 14px rgba(120,80,240,0.35)"></div><svg style="position:absolute;left:1780px;top:1336px" width="10" height="16"><path d="M3.2 3.2 L6 1.6 V13.4" stroke="#fff" stroke-width="2" fill="none" stroke-linejoin="round"/></svg><svg style="position:absolute;left:1724px;top:1335px" width="18" height="16" viewBox="0 0 18 16"><path d="M15.5 8 H2 M8 2 L2 8 L8 14" stroke="#3B4048" stroke-width="1.5" fill="none" stroke-linecap="round" stroke-linejoin="round"/></svg><svg style="position:absolute;left:1829px;top:1335px" width="18" height="16" viewBox="0 0 18 16"><path d="M2.5 8 H16 M10 2 L16 8 L10 14" stroke="#3B4048" stroke-width="1.5" fill="none" stroke-linecap="round" stroke-linejoin="round"/></svg><div class="t" style="left:832.00px;top:1440.00px;font-size:18px;font-weight:400;letter-spacing:0.000px;color:#565C64;transform:scaleX(1.0115);transform-origin:-0.00px 0;">Copyright © 2026 MarifaLMS. All rights reserved | Made By UXSEVEN</div>
</body></html>
